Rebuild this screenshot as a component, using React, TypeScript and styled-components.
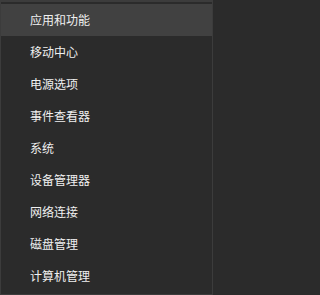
import React from 'react'
import styled, { createGlobalStyle } from 'styled-components'

const MENU_BG = '#2b2b2b'
const MENU_BORDER = '#3c3c3c'
const HOVER_BG = '#414141'
const TEXT = '#f0f0f0'

const items = [
  '应用和功能',
  '移动中心',
  '电源选项',
  '事件查看器',
  '系统',
  '设备管理器',
  '网络连接',
  '磁盘管理',
  '计算机管理',
]

const GlobalStyle = createGlobalStyle`
  html, body {
    margin: 0;
    padding: 0;
    background: ${MENU_BG};
  }
`

const Menu = styled.ul`
  box-sizing: border-box;
  width: 213px;
  height: 295px;
  margin: 0;
  padding: 2px 0 2px;
  list-style: none;
  background: ${MENU_BG};
  border: 1px solid ${MENU_BORDER};
  border-top-width: 2px;
  font-family: 'Noto Sans CJK SC', 'Microsoft YaHei', sans-serif;
  font-size: 12px;
  color: ${TEXT};
`

const Item = styled.li<{ $active?: boolean }>`
  display: flex;
  align-items: center;
  height: 32px;
  padding-left: 29px;
  background: ${({ $active }) => ($active ? HOVER_BG : 'transparent')};
  line-height: 1;
  white-space: nowrap;
`

export default function App() {
  return (
    <>
      <GlobalStyle />
      <Menu>
        {items.map((label, index) => (
          <Item key={label} $active={index === 0}>
            {label}
          </Item>
        ))}
      </Menu>
    </>
  )
}
